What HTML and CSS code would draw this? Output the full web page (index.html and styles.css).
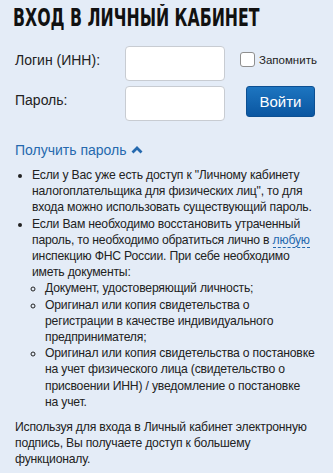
FILE: index.html
```html
<!DOCTYPE html>
<html lang="ru">
<head>
<meta charset="utf-8">
<link rel="stylesheet" href="styles.css">
</head>
<body>
<div class="page">
  <h1 class="title"><span class="title-text">ВХОД В ЛИЧНЫЙ КАБИНЕТ</span></h1>
  <form class="login">
    <label class="label" for="login">Логин (ИНН):</label>
    <input class="field" id="login" type="text">
    <label class="remember"><span class="box"></span>Запомнить</label>
    <label class="label" for="pass">Пароль:</label>
    <input class="field" id="pass" type="password">
    <button class="btn" type="button">Войти</button>
  </form>
  <a class="toggle">Получить пароль <svg class="chev" width="12" height="9" viewBox="0 0 12 9"><path d="M1.5 7.5 L6 3 L10.5 7.5" fill="none" stroke="#2569ae" stroke-width="2.8" stroke-linecap="butt"/></svg></a>
  <ul class="info">
    <li>Если у Вас уже есть доступ к "Личному кабинету<br>налогоплательщика для физических лиц", то для<br>входа можно использовать существующий пароль.</li>
    <li>Если Вам необходимо восстановить утраченный<br>пароль, то необходимо обратиться лично в <a class="dash">любую</a><br>инспекцию ФНС России. При себе необходимо<br>иметь документы:
      <ul class="sub">
        <li>Документ, удостоверяющий личность;</li>
        <li>Оригинал или копия свидетельства о<br>регистрации в качестве индивидуального<br>предпринимателя;</li>
        <li>Оригинал или копия свидетельства о постановке<br>на учет физического лица (свидетельство о<br>присвоении ИНН) / уведомление о постановке<br>на учет.</li>
      </ul>
    </li>
  </ul>
  <p class="note">Используя для входа в Личный кабинет электронную<br>подпись, Вы получаете доступ к большему<br>функционалу.</p>
</div>
</body>
</html>
```
FILE: styles.css
```css
html, body {
  margin: 0;
  padding: 0;
  background: #e4ecf7;
}
body {
  font-family: "Liberation Sans", Arial, sans-serif;
  color: #222;
  font-size: 12px;
}
.page {
  padding: 4px 0 0 15px;
}
.title {
  margin: 0 0 14px -2px;
  font-family: "DejaVu Sans", sans-serif;
  font-stretch: condensed;
  font-weight: bold;
  font-size: 25px;
  line-height: 28px;
  color: #111;
  white-space: nowrap;
  overflow: hidden;
}
.title-text {
  display: inline-block;
  transform: scaleX(0.70);
  transform-origin: left center;
}
.login {
  display: grid;
  grid-template-columns: 110px 100px auto;
  grid-auto-rows: 35px;
  row-gap: 5px;
  align-items: center;
  margin: 0;
}
.label {
  font-size: 14px;
  color: #222;
  margin-top: -8px;
}
.field {
  box-sizing: border-box;
  width: 100px;
  height: 35px;
  border: 1px solid #c8ccd2;
  border-radius: 4px;
  background: #fff;
  margin: 0;
}
.remember {
  display: flex;
  align-items: center;
  font-size: 11.5px;
  color: #222;
  margin-left: 15px;
  margin-top: -8px;
}
.box {
  display: inline-block;
  width: 13px;
  height: 13px;
  border: 1px solid #8f8f8f;
  border-radius: 3px;
  background: #fff;
  margin-right: 4px;
}
.btn {
  justify-self: start;
  align-self: start;
  margin-left: 21px;
  width: 69px;
  height: 31px;
  border: 1px solid #0c4f92;
  border-radius: 3px;
  background: linear-gradient(#1d75c0, #0a56a1);
  color: #fff;
  font-family: "Liberation Sans", Arial, sans-serif;
  font-size: 15px;
  padding: 0;
}
.toggle {
  display: inline-flex;
  align-items: center;
  gap: 4px;
  margin-top: 21px;
  font-size: 14px;
  color: #2569ae;
}
.chev {
  margin-top: -2px;
}
.info {
  margin: 9px 0 0;
  padding: 0 0 0 17px;
  line-height: 16.2px;
  font-size: 12.2px;
  letter-spacing: -0.2px;
  white-space: nowrap;
}
.sub {
  margin: 0;
  padding: 0 0 0 13px;
  list-style: circle;
}
.dash {
  color: #2569ae;
  text-decoration: none;
  border-bottom: 1px dashed #2569ae;
}
.note {
  margin: 9px 0 0;
  line-height: 16.2px;
  font-size: 12.2px;
  letter-spacing: -0.2px;
  white-space: nowrap;
}
```
